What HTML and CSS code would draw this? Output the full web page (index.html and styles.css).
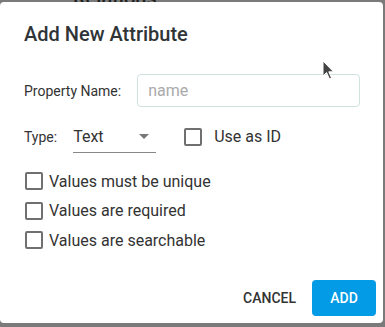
FILE: index.html
```html
<!DOCTYPE html>
<html>
<head>
<meta charset="utf-8">
<link rel="stylesheet" href="styles.css">
</head>
<body>
<div class="backdrop-text">Relations</div>
<div class="dialog">
  <h1 class="title">Add New Attribute</h1>
  <div class="row name-row">
    <label class="label">Property Name:</label>
    <input class="input" type="text" placeholder="name">
  </div>
  <div class="row type-row">
    <span class="label type-label">Type:</span>
    <div class="select">
      <span class="select-value">Text</span>
      <span class="caret"></span>
    </div>
    <label class="check id-check"><span class="box"></span><span class="check-text">Use as ID</span></label>
  </div>
  <div class="checks">
    <label class="check"><span class="box"></span><span class="check-text">Values must be unique</span></label>
    <label class="check"><span class="box"></span><span class="check-text">Values are required</span></label>
    <label class="check"><span class="box"></span><span class="check-text">Values are searchable</span></label>
  </div>
  <div class="actions">
    <button class="btn btn-flat">CANCEL</button>
    <button class="btn btn-primary">ADD</button>
  </div>
  <svg class="cursor" width="14" height="22" viewBox="0 0 14 22"><path d="M1 1 L1 16 L4.5 12.5 L7.5 19 L9.5 18 L6.8 11.8 L11.5 11.8 Z" fill="#444" stroke="#fff" stroke-width="1"/></svg>
</div>
</body>
</html>
```
FILE: styles.css
```css
html, body {
  margin: 0;
  padding: 0;
}
body {
  width: 385px;
  height: 327px;
  background: #7a7a7a;
  overflow: hidden;
  position: relative;
  font-family: Roboto, "Noto Sans", sans-serif;
  color: #333;
}
.backdrop-text {
  position: absolute;
  left: 73px;
  top: -14px;
  font-size: 20px;
  font-weight: 500;
  color: #1f1f1f;
}
.dialog {
  position: absolute;
  left: 0;
  top: 2px;
  width: 383px;
  height: 321px;
  background: #fff;
  border-radius: 4px;
  box-sizing: border-box;
  padding: 0 24px;
}
.title {
  margin: 0;
  padding-top: 20px;
  font-size: 20px;
  font-weight: 500;
  line-height: 24px;
  color: #2f3437;
}
.row {
  display: flex;
  align-items: center;
}
.name-row {
  margin-top: 28px;
  height: 33px;
}
.label {
  font-size: 14px;
  color: #333;
  white-space: nowrap;
  flex: none;
}
.input {
  margin-left: 16px;
  width: 223px;
  height: 33px;
  box-sizing: border-box;
  border: 1px solid #cfe2e0;
  border-radius: 4px;
  padding: 0 10px;
  font-family: Roboto, sans-serif;
  font-size: 16px;
  color: #333;
  outline: none;
  flex: none;
}
.input::placeholder {
  color: #aaa;
}
.type-row {
  margin-top: 13px;
  height: 33px;
}
.select {
  margin-left: 16px;
  width: 83px;
  height: 33px;
  box-sizing: border-box;
  border-bottom: 1px solid #888;
  display: flex;
  align-items: center;
  justify-content: space-between;
  padding-right: 7px;
}
.select-value {
  font-size: 16px;
  color: #333;
}
.caret {
  width: 0;
  height: 0;
  border-left: 5px solid transparent;
  border-right: 5px solid transparent;
  border-top: 5px solid #777;
}
.check {
  display: flex;
  align-items: center;
}
.box {
  width: 18px;
  height: 18px;
  box-sizing: border-box;
  border: 2px solid #707070;
  border-radius: 2px;
  flex: none;
}
.check-text {
  font-size: 16px;
  color: #333;
}
.id-check {
  margin-left: 28px;
}
.id-check .check-text {
  margin-left: 12px;
}
.checks {
  margin-top: 19px;
  display: flex;
  flex-direction: column;
  gap: 11.5px;
}
.checks .check {
  height: 18px;
  padding-left: 1px;
}
.checks .check-text {
  margin-left: 6px;
}
.actions {
  position: absolute;
  right: 7px;
  bottom: 7px;
  display: flex;
  gap: 0;
  align-items: center;
}
.btn {
  font-family: Roboto, sans-serif;
  font-size: 14px;
  font-weight: 500;
  border: none;
  border-radius: 4px;
  height: 36px;
  padding: 0 16px;
  background: transparent;
  color: #333;
}
.btn-primary {
  background: #039be5;
  color: #fff;
  width: 64px;
}
.cursor {
  position: absolute;
  left: 322px;
  top: 58px;
}
```
